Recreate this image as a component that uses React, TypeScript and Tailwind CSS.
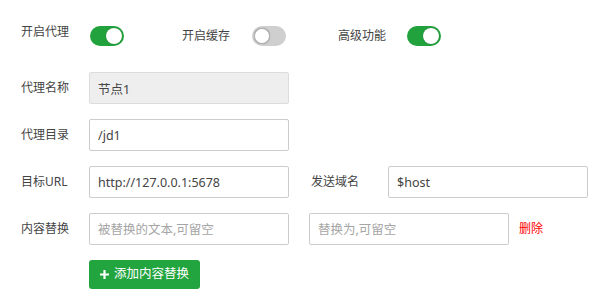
import { useState } from "react";

const Toggle = ({ on }: { on: boolean }) => (
  <div
    className={
      "relative h-[20px] w-[34px] rounded-full " +
      (on ? "bg-[#21a23c]" : "bg-[#cfcfcf]")
    }
  >
    <div
      className={
        "absolute top-[2px] h-[16px] w-[16px] rounded-full bg-white shadow-[0_0_1px_rgba(0,0,0,0.4)] " +
        (on ? "left-[16px]" : "left-[2px] border border-[#b5b5b5]")
      }
    />
  </div>
);

const Label = ({ text }: { text: string }) => (
  <div className="w-[68px] shrink-0 text-[12px] text-[#444]">{text}</div>
);

const Field = ({
  value,
  placeholder,
  disabled,
}: {
  value?: string;
  placeholder?: string;
  disabled?: boolean;
}) => (
  <input
    className={
      "h-[32px] w-[200px] rounded-[2px] border px-[8px] text-[12.5px] text-[#444] outline-none placeholder:text-[#a5a5a5] " +
      (disabled ? "border-[#dcdcdc] bg-[#eeeeee]" : "border-[#cccccc] bg-white")
    }
    defaultValue={value}
    placeholder={placeholder}
    disabled={disabled}
  />
);

export default function App() {
  const [proxy] = useState(true);

  return (
    <div
      className="h-[298px] w-[607px] bg-white pl-[21px] pt-[24px]"
      style={{ fontFamily: '"Noto Sans", "Noto Sans CJK SC", sans-serif' }}
    >
      <div className="flex h-[24px] items-center">
        <div className="mb-[9px] w-[69px] text-[12px] text-[#444]">开启代理</div>
        <Toggle on={proxy} />
        <div className="ml-[58px] w-[70px] text-[12px] text-[#444]">开启缓存</div>
        <Toggle on={false} />
        <div className="ml-[52px] w-[69px] text-[12px] text-[#444]">高级功能</div>
        <Toggle on={true} />
      </div>

      <div className="mt-[24px] flex flex-col gap-[15px]">
        <div className="flex items-center">
          <Label text="代理名称" />
          <Field value="节点1" disabled />
        </div>
        <div className="flex items-center">
          <Label text="代理目录" />
          <Field value="/jd1" />
        </div>
        <div className="flex items-center">
          <Label text="目标URL" />
          <Field value="http://127.0.0.1:5678" />
          <div className="ml-[22px] w-[77px] text-[12px] text-[#444]">发送域名</div>
          <Field value="$host" />
        </div>
        <div className="flex items-center">
          <Label text="内容替换" />
          <Field placeholder="被替换的文本,可留空" />
          <div className="ml-[20px]">
            <Field placeholder="替换为,可留空" />
          </div>
          <span className="ml-[10px] cursor-pointer text-[12px] text-[#ff0000]">删除</span>
        </div>
        <div className="flex pl-[68px]">
          <button className="flex h-[29px] w-[111px] items-center gap-[5px] rounded-[3px] bg-[#22a43f] pl-[11px] text-[12.5px] text-white">
            <svg width="9" height="9" viewBox="0 0 9 9">
              <path d="M3.4 0h2.2v3.4H9v2.2H5.6V9H3.4V5.6H0V3.4h3.4z" fill="white" />
            </svg>
            添加内容替换
          </button>
        </div>
      </div>
    </div>
  );
}
